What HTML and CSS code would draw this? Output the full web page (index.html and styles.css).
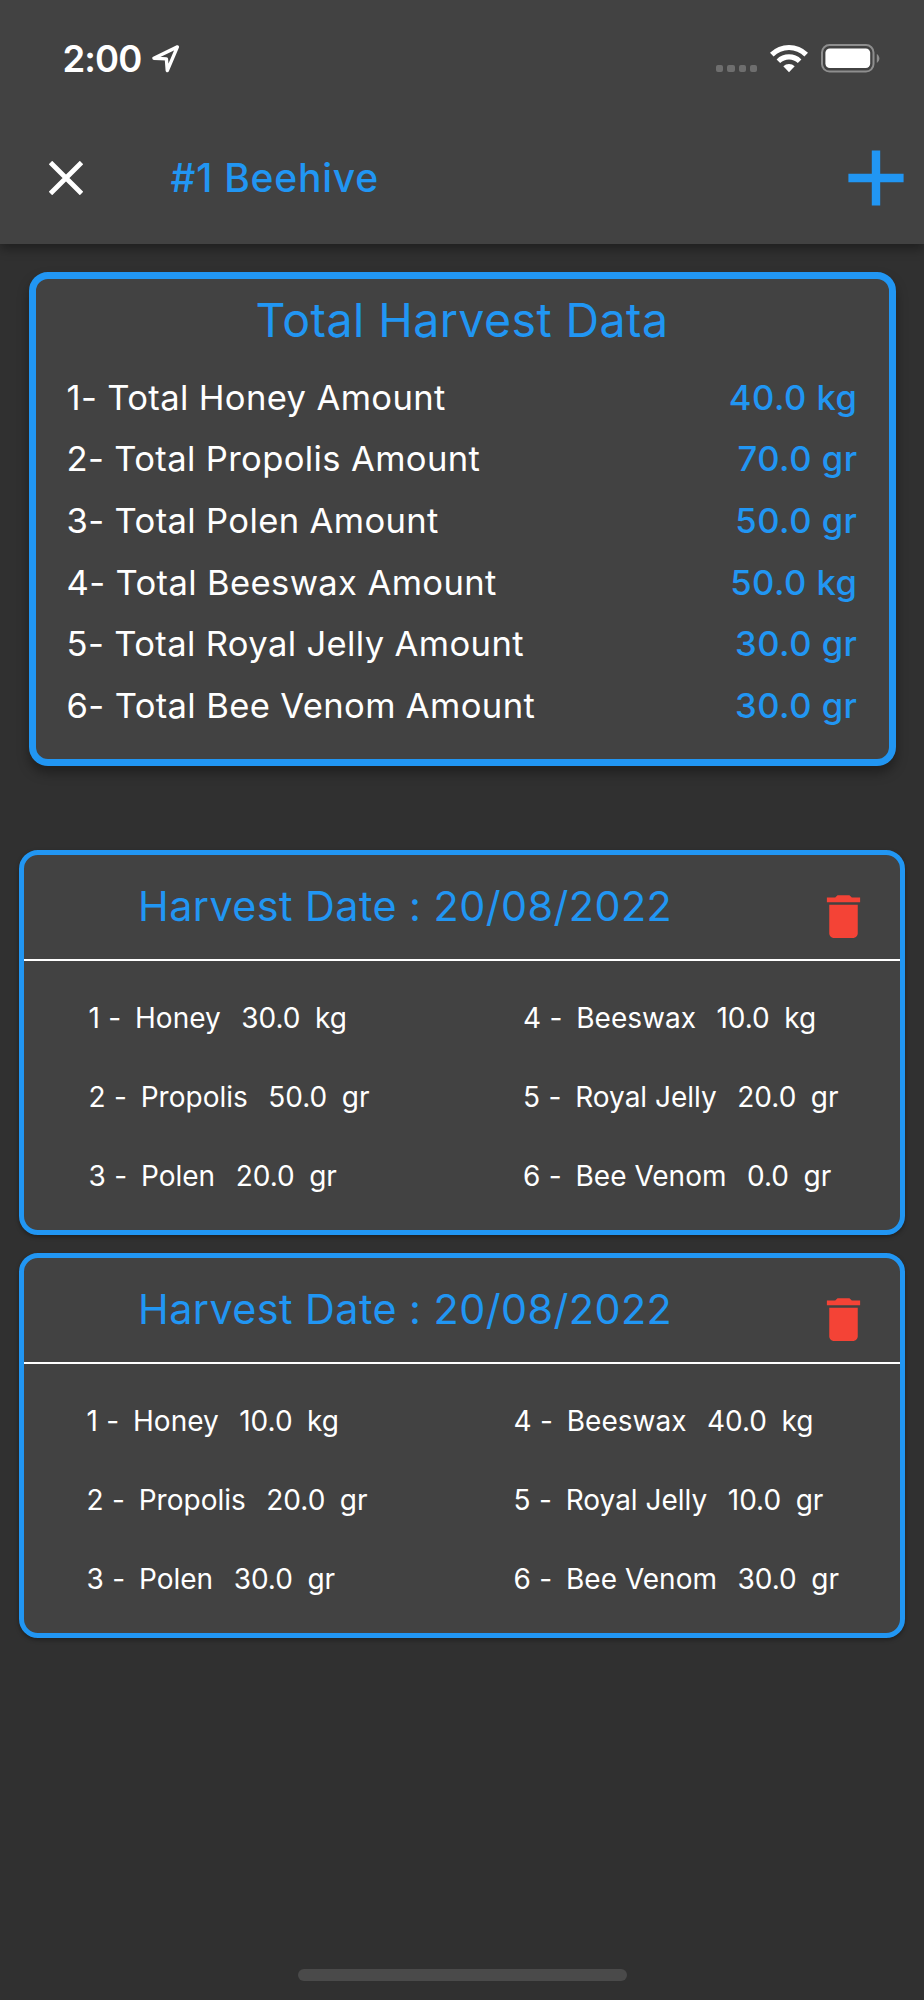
FILE: index.html
```html
<!DOCTYPE html>
<html lang="en">
<head>
  <meta charset="UTF-8">
  <meta name="viewport" content="width=device-width, initial-scale=1.0">
  <title>#1 Beehive - Harvest</title>
  <link rel="stylesheet" href="styles.css">
</head>
<body>
  <header class="top">
    <div class="status-bar">
      <span class="time">2:00</span>
      <svg class="location" width="30" height="30" viewBox="0 0 30 30">
        <path d="M2.9 14.2 L26.4 2.9 L16.3 26.6 L15.4 14.9 Z" fill="none" stroke="#fff" stroke-width="3.4" stroke-linejoin="round"/>
      </svg>
      <div class="status-icons">
        <div class="dots"><i></i><i></i><i></i><i></i></div>
        <svg class="wifi" width="38" height="29" viewBox="0 0 38 29">
          <path d="M0 8.8 A27 27 0 0 1 38 8.8 L34.4 12.4 A22 22 0 0 0 3.6 12.4 Z" fill="#fff"/>
          <path d="M6.6 15.4 A17.6 17.6 0 0 1 31.4 15.4 L27.8 19 A12.5 12.5 0 0 0 10.2 19 Z" fill="#fff"/>
          <path d="M13.3 22.2 A8.2 8.2 0 0 1 24.7 22.2 L19 28.3 Z" fill="#fff"/>
        </svg>
        <svg class="battery" width="60" height="29" viewBox="0 0 60 29">
          <rect x="1" y="1" width="51.5" height="26.6" rx="7.5" fill="none" stroke="#8e8e8e" stroke-width="2"/>
          <rect x="4.4" y="4.4" width="44.8" height="19.6" rx="4.4" fill="#fff"/>
          <path d="M55.8 10 A5.2 5.2 0 0 1 55.8 19 Z" fill="#8e8e8e"/>
        </svg>
      </div>
    </div>
    <div class="app-bar">
      <svg class="close" width="34" height="34" viewBox="0 0 34 34">
        <path d="M1.5 1.5 L32.5 32.5 M32.5 1.5 L1.5 32.5" stroke="#fff" stroke-width="4.8"/>
      </svg>
      <h1>#1 Beehive</h1>
      <svg class="add" width="56" height="56" viewBox="0 0 56 56">
        <path d="M28 0.4 V55.6 M0.4 28 H55.6" stroke="#2196f3" stroke-width="8.4"/>
      </svg>
    </div>
  </header>

  <main>
    <section class="total-card">
      <h2>Total Harvest Data</h2>
      <div class="total-row"><span>1- Total Honey Amount</span><b>40.0 kg</b></div>
      <div class="total-row"><span>2- Total Propolis Amount</span><b>70.0 gr</b></div>
      <div class="total-row"><span>3- Total Polen Amount</span><b>50.0 gr</b></div>
      <div class="total-row"><span>4- Total Beeswax Amount</span><b>50.0 kg</b></div>
      <div class="total-row"><span>5- Total Royal Jelly Amount</span><b>30.0 gr</b></div>
      <div class="total-row"><span>6- Total Bee Venom Amount</span><b>30.0 gr</b></div>
    </section>

    <section class="harvest-card">
      <div class="harvest-header">
        <h3>Harvest Date : 20/08/2022</h3>
        <svg class="delete" width="57" height="57" viewBox="0 0 24 24">
          <path fill="#f44336" d="M6 19c0 1.1.9 2 2 2h8c1.1 0 2-.9 2-2V7H6v12zM19 4h-3.5l-1-1h-5l-1 1H5v2h14V4z"/>
        </svg>
      </div>
      <div class="harvest-body">
        <div class="col">
          <p><span class="num">1 -</span><span class="name">Honey</span><span class="value">30.0</span><span class="unit">kg</span></p>
          <p><span class="num">2 -</span><span class="name">Propolis</span><span class="value">50.0</span><span class="unit">gr</span></p>
          <p><span class="num">3 -</span><span class="name">Polen</span><span class="value">20.0</span><span class="unit">gr</span></p>
        </div>
        <div class="col">
          <p><span class="num">4 -</span><span class="name">Beeswax</span><span class="value">10.0</span><span class="unit">kg</span></p>
          <p><span class="num">5 -</span><span class="name">Royal Jelly</span><span class="value">20.0</span><span class="unit">gr</span></p>
          <p><span class="num">6 -</span><span class="name">Bee Venom</span><span class="value">0.0</span><span class="unit">gr</span></p>
        </div>
      </div>
    </section>

    <section class="harvest-card">
      <div class="harvest-header">
        <h3>Harvest Date : 20/08/2022</h3>
        <svg class="delete" width="57" height="57" viewBox="0 0 24 24">
          <path fill="#f44336" d="M6 19c0 1.1.9 2 2 2h8c1.1 0 2-.9 2-2V7H6v12zM19 4h-3.5l-1-1h-5l-1 1H5v2h14V4z"/>
        </svg>
      </div>
      <div class="harvest-body wide">
        <div class="col">
          <p><span class="num">1 -</span><span class="name">Honey</span><span class="value">10.0</span><span class="unit">kg</span></p>
          <p><span class="num">2 -</span><span class="name">Propolis</span><span class="value">20.0</span><span class="unit">gr</span></p>
          <p><span class="num">3 -</span><span class="name">Polen</span><span class="value">30.0</span><span class="unit">gr</span></p>
        </div>
        <div class="col">
          <p><span class="num">4 -</span><span class="name">Beeswax</span><span class="value">40.0</span><span class="unit">kg</span></p>
          <p><span class="num">5 -</span><span class="name">Royal Jelly</span><span class="value">10.0</span><span class="unit">gr</span></p>
          <p><span class="num">6 -</span><span class="name">Bee Venom</span><span class="value">30.0</span><span class="unit">gr</span></p>
        </div>
      </div>
    </section>
  </main>

  <div class="home-indicator"></div>
</body>
</html>
```
FILE: styles.css
```css
* { box-sizing: border-box; margin: 0; padding: 0; }
body { width: 924px; height: 2000px; display: flex; flex-direction: column; overflow: hidden; background: #303030; color: #fff; font-family: Inter, "Liberation Sans", sans-serif; }
svg { display: block; flex: none; }

/* status bar + app bar */
.top { height: 243.7px; flex: none; background: #424242; box-shadow: 0 5px 10px rgba(0, 0, 0, 0.35); }
.status-bar { height: 111px; display: flex; align-items: flex-start; padding: 44px 43px 0 62.5px; }
.time { width: 88.5px; font-size: 36.5px; font-weight: 600; line-height: 31px; letter-spacing: -0.9px; white-space: nowrap; }
.status-icons { margin-left: auto; display: flex; }
.dots { display: flex; gap: 4px; padding-top: 21px; margin-right: 13px; }
.dots i { width: 7.2px; height: 7.2px; border-radius: 2px; background: #6e6e6e; }
.battery { margin-left: 13px; }
.app-bar { height: 132px; display: flex; align-items: center; padding: 2px 20px 0 49px; }
.app-bar h1 { margin-left: 87.5px; font-size: 39px; font-weight: 500; line-height: 50px; letter-spacing: 0.75px; }
.add { margin-left: auto; }

/* totals */
.total-card { height: 493.5px; margin: 28.8px 28.5px 0; border: 7px solid #2196f3; border-radius: 19px; background: #424242; padding: 0 31px; box-shadow: 0 7px 12px rgba(0, 0, 0, 0.35); }
.total-card h2 { padding-top: 1px; margin-bottom: 5.8px; font-size: 46.5px; font-weight: 400; line-height: 80.6px; letter-spacing: 0.42px; text-align: center; white-space: nowrap; }
.total-row { display: flex; justify-content: space-between; font-size: 34.6px; line-height: 61.6px; letter-spacing: 0.36px; }
.total-row b { font-weight: 500; letter-spacing: 0.5px; }
h1, h2, h3, .total-row b { color: #2196f3; }

/* harvest list */
.harvest-card { height: 384.4px; margin: 84.3px 19px 0; border: 5px solid #2196f3; border-radius: 19px; background: #424242; box-shadow: 0 2px 4px rgba(0, 0, 0, 0.35); }
.harvest-card + .harvest-card { margin-top: 18.5px; }
.harvest-header { height: 105.6px; display: flex; align-items: flex-start; justify-content: space-between; padding: 0 28.5px 0 114px; border-bottom: 2.4px solid #fff; }
.harvest-header h3 { font-size: 41.3px; font-weight: 400; line-height: 103px; letter-spacing: 0.45px; white-space: nowrap; }
.delete { margin-top: 33px; }
.harvest-body { display: grid; grid-template-columns: 434.5px 1fr; padding: 18px 0 0 64.5px; }
.harvest-body.wide { grid-template-columns: 427px 1fr; padding-left: 62.5px; }
.harvest-body p { display: flex; font-size: 28px; line-height: 79px; white-space: nowrap; }
.num { letter-spacing: 0.3px; }
.name { margin-left: 13.5px; }
.value { margin-left: 20.5px; }
.unit { margin-left: 14.5px; }

.home-indicator { width: 329px; height: 12px; margin: auto auto 19px; border-radius: 6px; background: #4a4a4a; }
```
